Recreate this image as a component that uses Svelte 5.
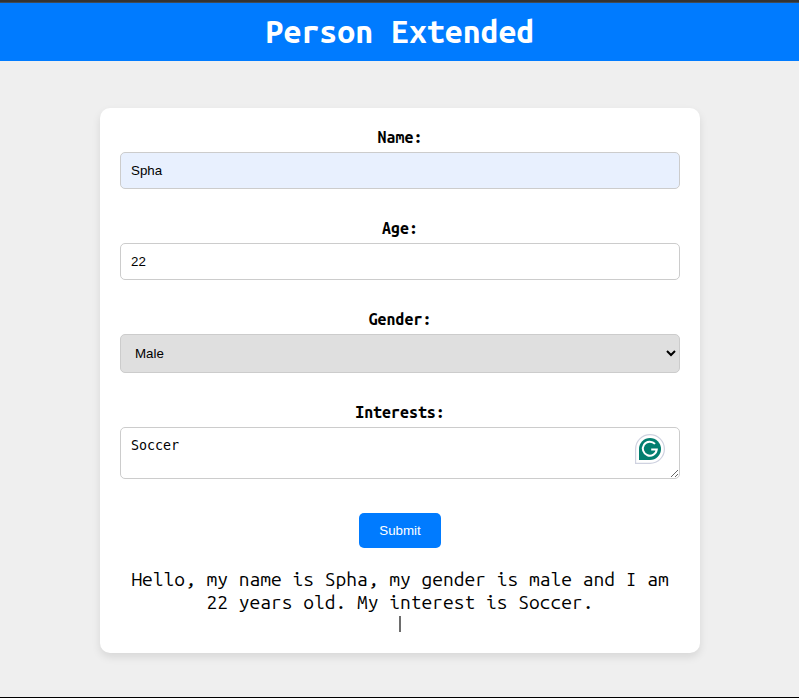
<script>
  let name = $state('Spha');
  let age = $state('22');
  let gender = $state('male');
  let interests = $state('Soccer');
</script>

<div class="page">
  <header><h1>Person Extended</h1></header>
  <main>
    <div class="card">
      <label for="name">Name:</label>
      <input id="name" class="filled" type="text" bind:value={name} />

      <label for="age">Age:</label>
      <input id="age" type="text" bind:value={age} />

      <label for="gender">Gender:</label>
      <select id="gender" bind:value={gender}>
        <option value="male">Male</option>
        <option value="female">Female</option>
      </select>

      <label for="interests">Interests:</label>
      <div class="area">
        <textarea id="interests" spellcheck="false" bind:value={interests}></textarea>
        <svg class="badge" width="30" height="30" viewBox="0 0 30 30">
          <path d="M.6 29.4V15A14.4 14.4 0 1 1 15 29.4Z" fill="#fff" stroke="#cfd2e0" stroke-width="1.2" />
          <path d="M4 26V15A11 11 0 1 1 15 26Z" fill="#027e6f" />
          <path d="M20 9.9A7 7 0 1 0 21.8 15.4H16.2" fill="none" stroke="#fff" stroke-width="2" />
        </svg>
      </div>

      <button type="button">Submit</button>
      <p>Hello, my name is Spha, my gender is male and I am 22 years old. My interest is Soccer.</p>
      <span class="caret"></span>
    </div>
  </main>
</div>

<style>
  .page {
    box-sizing: border-box;
    height: 698px;
    display: flex;
    flex-direction: column;
    overflow: hidden;
    border-top: 2px solid #333;
    border-bottom: 1px solid #000;
    background: #efefef;
    color: #000;
    font-family: "Ubuntu Sans Mono", "Ubuntu Mono", "DejaVu Sans Mono", monospace;
  }
  header {
    box-sizing: border-box;
    height: 59px;
    flex: none;
    background: #007bff;
    border-top: 1px solid #3e4a57;
  }
  h1 {
    margin: 0;
    padding-left: 1px;
    text-align: center;
    color: #fff;
    font-size: 32px;
    line-height: 58px;
    font-weight: 700;
  }
  main {
    display: flex;
    justify-content: center;
    padding: 47px 0 0 1px;
  }
  .card {
    box-sizing: border-box;
    width: 600px;
    height: 545px;
    padding: 20px;
    display: flex;
    flex-direction: column;
    align-items: center;
    background: #fff;
    border-radius: 10px;
    box-shadow: 0 4px 8px rgba(0, 0, 0, 0.1);
  }
  label {
    height: 24px;
    line-height: 19px;
    font-size: 16px;
    font-weight: 700;
  }
  input,
  select,
  textarea {
    box-sizing: border-box;
    display: block;
    width: 100%;
    margin: 0;
    padding: 10px;
    border: 1px solid #ccc;
    border-radius: 5px;
    color: #000;
    background: #fff;
    font: 13.333px "Liberation Sans", Arial, sans-serif;
  }
  input {
    height: 37px;
    margin-bottom: 30px;
  }
  .filled {
    background: #e8f0fe;
  }
  select {
    height: 39px;
    margin-bottom: 30px;
    background: #dfdfdf;
  }
  .area {
    position: relative;
    width: 100%;
    height: 52px;
    margin-bottom: 34px;
  }
  textarea {
    height: 52px;
    overflow: hidden;
    resize: vertical;
    font-family: "DejaVu Sans Mono", monospace;
  }
  .badge {
    position: absolute;
    right: 15px;
    top: 7px;
  }
  button {
    width: 82px;
    height: 35px;
    flex: none;
    padding: 0;
    border: 0;
    border-radius: 5px;
    background: #007bff;
    color: #fff;
    font: 13.333px "Liberation Sans", Arial, sans-serif;
  }
  p {
    width: 560px;
    margin: 20px 0 0;
    text-align: center;
    font-size: 19.2px;
    line-height: 23px;
  }
  .caret {
    width: 2px;
    height: 16px;
    margin-top: 2px;
    background: #6d6d6d;
  }
</style>
